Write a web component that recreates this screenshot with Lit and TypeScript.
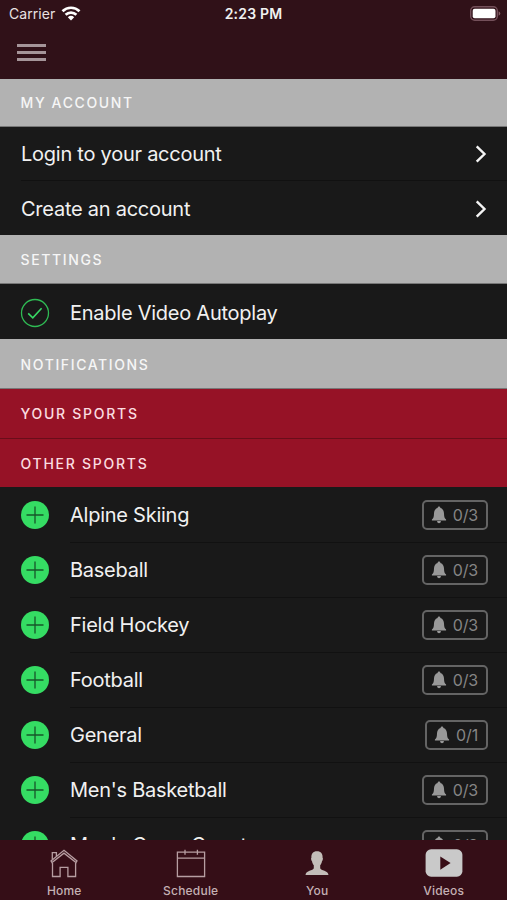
import { LitElement, html, css, svg } from "lit";
import { customElement, property } from "lit/decorators.js";

const wifi = svg`<svg width="20" height="15" viewBox="0 0 20 15" fill="none" stroke="#fff" stroke-width="2.7">
  <path d="M1.5 5.2C6.2 .6 13.8 .6 18.5 5.2"/><path d="M4.6 8.7C7.7 5.8 12.3 5.8 15.4 8.7"/>
  <path d="M10 14.4L6.8 11.2Q10 8.5 13.2 11.2Z" fill="#fff" stroke="none"/></svg>`;
const battery = svg`<svg width="31" height="15" viewBox="0 0 31 15">
  <rect x=".7" y=".7" width="26.6" height="13.6" rx="4" fill="none" stroke="#74505a" stroke-width="1.4"/>
  <rect x="2.7" y="2.7" width="22.8" height="9.6" rx="2" fill="#fff"/>
  <path d="M28.6 5.2Q30.3 5.9 30.3 7.5T28.6 9.8Z" fill="#865f66"/></svg>`;
const chevron = svg`<svg width="12" height="18" viewBox="0 0 12 18" fill="none" stroke="#f4f4f4" stroke-width="2.4"><path d="M1.7 1.3L9.5 9L1.7 16.7"/></svg>`;
const check = svg`<svg width="30" height="30" viewBox="0 0 30 30" fill="none" stroke="#2fbb54">
  <circle cx="15" cy="15" r="13.5" stroke-width="1.3"/><path d="M8.2 15.4L12.8 19.8L21.6 10.3" stroke="#38d965" stroke-width="1.6"/></svg>`;
const plus = svg`<svg width="30" height="30" viewBox="0 0 30 30"><circle cx="15" cy="15" r="14" fill="#35dc63"/>
  <path d="M6.5 15H23.5M15 6.5V23.5" stroke="#17552a" stroke-width="1.3"/></svg>`;
const bell = svg`<svg width="16" height="18" viewBox="0 0 16 18" fill="#999">
  <path d="M8 .6C8.9.6 9.3 1.2 9.4 1.9C12 2.7 12.9 5 13 7.4C13.1 10.5 13.4 12 15.1 13.6V14.6H.9V13.6C2.6 12 2.9 10.5 3 7.4C3.1 5 4 2.7 6.6 1.9C6.7 1.2 7.1.6 8 .6Z"/><path d="M6 15.1H10Q9.7 17.3 8 17.3T6 15.1Z"/></svg>`;
const home = svg`<svg width="30" height="30" viewBox="0 0 30 30" fill="none" stroke="#b79ea2" stroke-width="1.3">
  <path d="M3.5 14V27.5H11.1V18.3H18.9V27.5H26.6V14"/><path d="M2 12L15 1.3L28 12L27 13.6L15 4.2L3 13.6Z"/><path d="M3.3 10.8V3.6H7.4V7.4"/></svg>`;
const calendar = svg`<svg width="30" height="30" viewBox="0 0 30 30" fill="none" stroke="#b79ea2" stroke-width="1.3">
  <path d="M1.4 3.2H28.6V27.5H1.4ZM1.4 9.1H28.6M9 .8V5.8M21.4 .8V5.8"/></svg>`;
const person = svg`<svg width="26" height="30" viewBox="0 0 26 30" fill="#c3bdb9">
  <path d="M13 2.2C17 2.2 18.8 4.8 18.6 8.7C19.3 9 18.8 11.5 18 12.3C17.7 14.3 17 15.3 16.2 16.2V19.2C16.7 21.9 24.2 21 24.5 26H1.5C1.8 21 9.3 21.9 9.8 19.2V16.2C9 15.3 8.3 14.3 8 12.3C7.2 11.5 6.7 9 7.4 8.7C7.2 4.8 9 2.2 13 2.2Z"/></svg>`;
const video = svg`<svg width="38" height="30" viewBox="0 0 38 30"><rect x=".6" y=".3" width="36.8" height="27.4" rx="5.5" fill="#c9c9c9"/><path d="M15.3 7.4V20.8L25.6 14.1Z" fill="#380d16"/></svg>`;

@customElement("section-bar")
class SectionBar extends LitElement {
  @property() label = "";
  static styles = css`
    :host { display: flex; flex: none; align-items: center; box-sizing: border-box; padding: 0 20.5px; color: #f6f6f6; font-size: 14px; font-weight: 500; letter-spacing: 1.62px; }
  `;
  render() { return html`<span>${this.label}</span>`; }
}

@customElement("sport-row")
class SportRow extends LitElement {
  @property() name = "";
  @property() count = "";
  static styles = css`
    :host { display: flex; flex: none; height: 55px; align-items: stretch; padding-left: 20px; }
    .icon { display: flex; width: 50px; height: 54px; align-items: center; }
    .body { display: flex; flex: 1; align-items: center; justify-content: space-between; padding-right: 19px; border-bottom: 1px solid #111; }
    .badge { display: flex; align-items: center; gap: 6px; box-sizing: border-box; height: 30px; padding: 0 8px 0 8px; border: 2px solid #646464; border-radius: 5px; color: #858585; font-size: 16px; letter-spacing: -0.15px; }
    .badge svg { margin: 0 0 1px -1px; }
  `;
  render() {
    return html`<div class="icon">${plus}</div>
      <div class="body"><span>${this.name}</span><div class="badge">${bell}<span>${this.count}</span></div></div>`;
  }
}

const sports = [["Alpine Skiing", "0/3"], ["Baseball", "0/3"], ["Field Hockey", "0/3"], ["Football", "0/3"], ["General", "0/1"], ["Men's Basketball", "0/3"], ["Men's Cross Country", "0/3"]];

@customElement("app-root")
class AppRoot extends LitElement {
  static styles = css`
    :host { display: flex; flex-direction: column; width: 507px; height: 900px; overflow: hidden; background: #191919; color: #f1f1f1; font-family: Inter, "Liberation Sans", sans-serif; font-size: 20px; letter-spacing: -0.25px; }
    svg { display: block; }
    header { flex: none; height: 79px; background: #301118; }
    .status { display: grid; grid-template-columns: 1fr auto 1fr; align-items: center; height: 27px; padding: 0 6px; font-size: 14px; }
    .carrier { display: flex; align-items: center; gap: 6px; padding-left: 3px; letter-spacing: 0.05px; color: #e9e2e3; }
    .time { font-weight: 600; letter-spacing: 0.2px; }
    .battery { justify-self: end; }
    .menu { display: flex; flex-direction: column; gap: 4px; width: 29px; padding: 17px 0 0 17px; }
    .line { height: 3px; background: #a59599; }
    main { display: flex; flex: 1; flex-direction: column; min-height: 0; overflow: hidden; }
    .gray { background: #b2b2b2; border-bottom: 1px solid #777; }
    .account { height: 48px; }
    .settings { height: 49px; padding-top: 1px; }
    .notifications { height: 50px; padding-top: 1px; }
    .red { background: #961226; color: #fbdde0; letter-spacing: 1.74px; }
    .yours { height: 50px; border-bottom: 1px solid #6a0d1a; }
    .others { height: 48px; margin-bottom: 1px; }
    .link { display: flex; flex: none; box-sizing: border-box; justify-content: space-between; align-items: center; height: 54px; margin-left: 21px; padding: 1px 20px 0 0; }
    .first { border-bottom: 1px solid #111; }
    .toggle { display: flex; flex: none; box-sizing: border-box; height: 55px; align-items: center; gap: 20px; padding: 2px 0 0 20px; }
    nav { display: grid; flex: none; grid-template-columns: repeat(4, 1fr); height: 60px; padding-left: 1px; background: #350e17; }
    .tab { display: flex; flex-direction: column; align-items: center; gap: 4px; padding-top: 9px; color: #c4b1b4; font-size: 12px; font-weight: 500; line-height: 15px; letter-spacing: 0.2px; }
  `;
  render() {
    const tabs = [[home, "Home"], [calendar, "Schedule"], [person, "You"], [video, "Videos"]];
    return html`
      <header>
        <div class="status"><div class="carrier"><span>Carrier</span>${wifi}</div><span class="time">2:23 PM</span><div class="battery">${battery}</div></div>
        <div class="menu"><div class="line"></div><div class="line"></div><div class="line"></div></div>
      </header>
      <main>
        <section-bar class="gray account" label="MY ACCOUNT"></section-bar>
        <div class="link first"><span>Login to your account</span>${chevron}</div>
        <div class="link"><span>Create an account</span>${chevron}</div>
        <section-bar class="gray settings" label="SETTINGS"></section-bar>
        <div class="toggle">${check}<span>Enable Video Autoplay</span></div>
        <section-bar class="gray notifications" label="NOTIFICATIONS"></section-bar>
        <section-bar class="red yours" label="YOUR SPORTS"></section-bar>
        <section-bar class="red others" label="OTHER SPORTS"></section-bar>
        ${sports.map(([name, count]) => html`<sport-row name=${name} count=${count}></sport-row>`)}
      </main>
      <nav>${tabs.map(([icon, label]) => html`<div class="tab">${icon}<span>${label}</span></div>`)}</nav>`;
  }
}
